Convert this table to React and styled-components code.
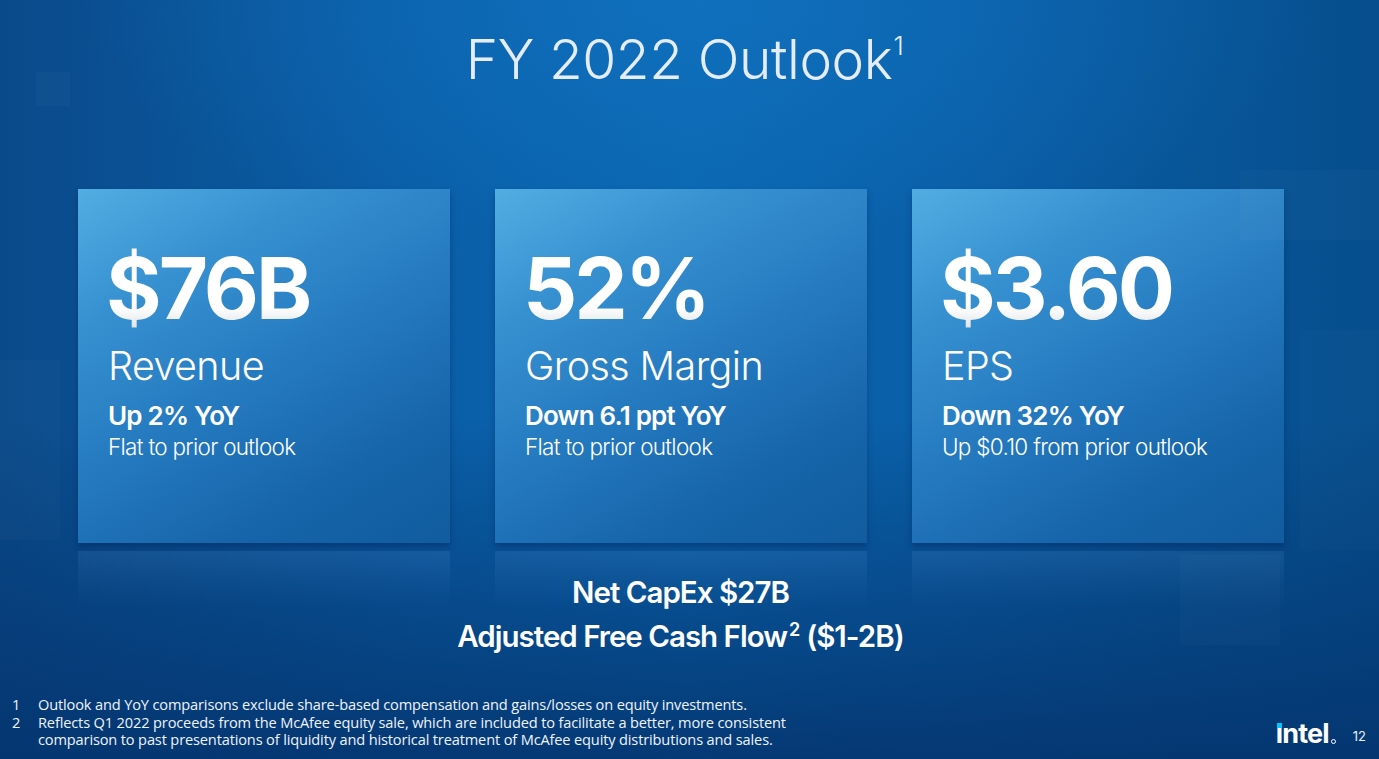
import React from "react";
import styled, { createGlobalStyle } from "styled-components";

const Global = createGlobalStyle`
  html, body { margin: 0; padding: 0; background: #053b78; }
  * { box-sizing: border-box; }
`;

const Slide = styled.div`
  position: relative;
  width: 1379px;
  height: 759px;
  overflow: hidden;
  font-family: Inter, "Noto Sans", sans-serif;
  color: #fff;
  display: flex;
  flex-direction: column;
  background:
    radial-gradient(ellipse 620px 260px at 700px 0px, rgba(20, 120, 200, 0.55), rgba(20, 120, 200, 0) 100%),
    linear-gradient(180deg, rgba(5, 59, 120, 0) 0%, rgba(5, 59, 120, 0) 55%, rgba(4, 52, 110, 0.9) 100%),
    linear-gradient(90deg, #0a4a8a 0%, #0a5ea7 30%, #0a66b0 50%, #0a5ea6 70%, #064e8d 100%);
`;

const Tile = styled.div`
  position: absolute;
  left: ${(p) => p.x}px;
  top: ${(p) => p.y}px;
  width: ${(p) => p.w}px;
  height: ${(p) => p.h}px;
  background: rgba(255, 255, 255, ${(p) => p.a});
`;

const Title = styled.h1`
  margin: 26px 0 0;
  text-align: center;
  font-weight: 300;
  font-size: 55px;
  line-height: 66px;
  letter-spacing: -0.4px;
  color: #e6edfa;
  padding-right: 10px;
  sup {
    font-size: 26px;
    vertical-align: 24px;
    line-height: 0;
    margin-left: 1px;
  }
`;

const CardRow = styled.div`
  margin-top: 97px;
  padding-left: 78px;
  display: grid;
  grid-template-columns: 372px 372px 372px;
  column-gap: 45px;
`;

const Column = styled.div`
  display: flex;
  flex-direction: column;
`;

const Card = styled.div`
  height: 354px;
  padding: 54px 0 0 30px;
  background: linear-gradient(150deg, #52ade2 0%, #3690d0 25%, #2377bd 55%, #1563a8 80%, #115c9f 100%);
  box-shadow: 0 4px 6px rgba(0, 30, 80, 0.35);
`;

const Reflection = styled.div`
  height: 56px;
  margin-top: 8px;
  background: linear-gradient(180deg, rgba(120, 180, 240, 0.12) 0%, rgba(120, 180, 240, 0.05) 50%, rgba(120, 180, 240, 0) 100%);
`;

const Value = styled.div`
  font-size: 85px;
  font-weight: 700;
  line-height: 92px;
  letter-spacing: -3px;
  background: linear-gradient(180deg, #ffffff 0%, #ffffff 70%, #d6d9de 100%);
  -webkit-background-clip: text;
  background-clip: text;
  color: transparent;
  margin-left: -2px;
`;

const Label = styled.div`
  font-size: 39.5px;
  font-weight: 300;
  line-height: 46px;
  letter-spacing: -0.6px;
  margin-top: 8px;
`;

const Change = styled.div`
  font-size: 26px;
  font-weight: 600;
  line-height: 30px;
  letter-spacing: -0.8px;
  margin-top: 12px;
`;

const Note = styled.div`
  font-size: 22.5px;
  font-weight: 300;
  line-height: 30px;
  letter-spacing: -0.7px;
  margin-top: 1px;
`;

const Summary = styled.div`
  margin-top: -34px;
  display: flex;
  flex-direction: column;
  align-items: center;
  gap: 6px;
  padding-right: 18px;
`;

const SummaryLine = styled.div`
  font-size: 29.5px;
  font-weight: 600;
  line-height: 38px;
  letter-spacing: -1px;
  sup {
    font-size: 18px;
    vertical-align: 11px;
    line-height: 0;
    margin: 0 7px 0 2px;
  }
`;

const Footer = styled.div`
  margin-top: auto;
  padding: 0 13px 10px 12px;
  display: flex;
  align-items: flex-end;
  justify-content: space-between;
`;

const Notes = styled.ol`
  margin: 0;
  padding: 0;
  list-style: none;
  font-family: "Open Sans", sans-serif;
  font-size: 14.6px;
  line-height: 17.6px;
  color: #eef3fb;
  letter-spacing: -0.15px;
`;

const NoteItem = styled.li`
  display: grid;
  grid-template-columns: 26px 1fr;
  width: 800px;
`;

const Brand = styled.div`
  display: flex;
  align-items: flex-end;
  gap: 17px;
  margin-bottom: 2px;
`;

const Logo = styled.div`
  position: relative;
  font-family: Inter, sans-serif;
  font-weight: 700;
  font-size: 27px;
  line-height: 27px;
  letter-spacing: -0.8px;
  color: #fff;
  display: flex;
  align-items: flex-end;
`;

const LogoDot = styled.span`
  position: absolute;
  left: 1px;
  top: 3px;
  width: 5px;
  height: 5px;
  background: #00c7fd;
`;

const LogoMark = styled.span`
  width: 5px;
  height: 5px;
  border-radius: 50%;
  border: 1px solid #fff;
  margin: 0 0 3px 2px;
`;

const PageNum = styled.div`
  font-size: 13px;
  font-weight: 400;
  line-height: 13px;
  margin-bottom: 4px;
  color: #e8eef8;
`;

const cards = [
  { value: "$76B", label: "Revenue", change: "Up 2% YoY", note: "Flat to prior outlook" },
  { value: "52%", label: "Gross Margin", change: "Down 6.1 ppt YoY", note: "Flat to prior outlook" },
  { value: "$3.60", label: "EPS", change: "Down 32% YoY", note: "Up $0.10 from prior outlook" },
];

const tiles = [
  { x: 36, y: 72, w: 34, h: 34, a: 0.025 },
  { x: 0, y: 360, w: 60, h: 180, a: 0.02 },
  { x: 1240, y: 170, w: 139, h: 70, a: 0.02 },
  { x: 1180, y: 555, w: 100, h: 90, a: 0.02 },
  { x: 1300, y: 330, w: 79, h: 220, a: 0.015 },
];

export default function App() {
  return (
    <>
      <Global />
      <Slide>
        {tiles.map((t, i) => (
          <Tile key={i} {...t} />
        ))}
        <Title>
          FY 2022 Outlook<sup>1</sup>
        </Title>
        <CardRow>
          {cards.map((c) => (
            <Column key={c.label}>
              <Card>
                <Value>{c.value}</Value>
                <Label>{c.label}</Label>
                <Change>{c.change}</Change>
                <Note>{c.note}</Note>
              </Card>
              <Reflection />
            </Column>
          ))}
        </CardRow>
        <Summary>
          <SummaryLine>Net CapEx $27B</SummaryLine>
          <SummaryLine>
            Adjusted Free Cash Flow<sup>2</sup>($1-2B)
          </SummaryLine>
        </Summary>
        <Footer>
          <Notes>
            <NoteItem>
              <span>1</span>
              <span>Outlook and YoY comparisons exclude share-based compensation and gains/losses on equity investments.</span>
            </NoteItem>
            <NoteItem>
              <span>2</span>
              <span>
                Reflects Q1 2022 proceeds from the McAfee equity sale, which are included to facilitate a better, more consistent
                comparison to past presentations of liquidity and historical treatment of McAfee equity distributions and sales.
              </span>
            </NoteItem>
          </Notes>
          <Brand>
            <Logo>
              <LogoDot />
              ıntel
              <LogoMark />
            </Logo>
            <PageNum>12</PageNum>
          </Brand>
        </Footer>
      </Slide>
    </>
  );
}
